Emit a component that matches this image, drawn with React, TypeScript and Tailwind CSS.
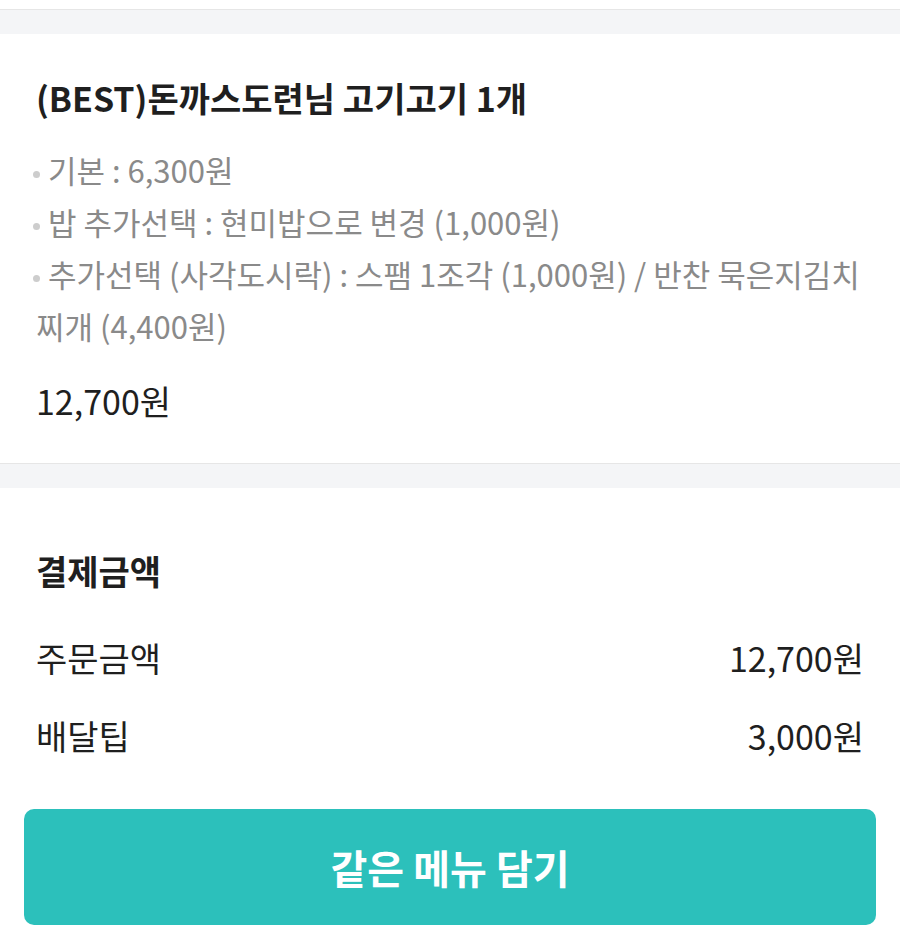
import React from 'react';

const font = { fontFamily: '"Noto Sans CJK KR", "Noto Sans", sans-serif' };

const options = [
  '기본 : 6,300원',
  '밥 추가선택 : 현미밥으로 변경 (1,000원)',
  '추가선택 (사각도시락) : 스팸 1조각 (1,000원) / 반찬 묵은지김치찌개 (4,400원)',
];

const Divider: React.FC = () => (
  <div className="h-[25px] bg-[#f4f5f7] border-t border-[#e6e6e6]" />
);

const Row: React.FC<{ label: string; value: string }> = ({ label, value }) => (
  <div className="flex items-center justify-between h-[78px] text-[34px] leading-none text-[#1f1f1f]">
    <span>{label}</span>
    <span>{value}</span>
  </div>
);

export default function App() {
  return (
    <div className="w-[900px] h-[935px] bg-white overflow-hidden" style={font}>
      <div className="h-[9px]" />
      <Divider />

      <section className="px-[36px] pt-[42px] pb-[40px]">
        <h1 className="text-[34px] font-bold text-[#1f1f1f] leading-[44px]">
          (BEST)돈까스도련님 고기고기 1개
        </h1>
        <ul className="mt-[24px] text-[31px] text-[#8a8a8a] leading-[52px]">
          {options.map((opt) => (
            <li key={opt}>
              <span className="inline-block w-[7px] h-[7px] ml-[-3px] mr-[8px] rounded-full bg-[#cdcdcd] align-middle" />
              {opt}
            </li>
          ))}
        </ul>
        <div className="mt-[27px] text-[34px] text-[#1f1f1f] leading-[44px]">12,700원</div>
      </section>

      <Divider />

      <section className="px-[36px] pt-[61px]">
        <h2 className="text-[34px] font-bold text-[#1f1f1f] leading-[44px]">결제금액</h2>
        <div className="mt-[26px]">
          <Row label="주문금액" value="12,700원" />
          <Row label="배달팁" value="3,000원" />
        </div>
      </section>

      <div className="px-[24px] mt-[34px]">
        <button className="w-full h-[116px] rounded-[10px] bg-[#2cc0bb] text-white text-[40px] font-bold">
          같은 메뉴 담기
        </button>
      </div>
    </div>
  );
}
